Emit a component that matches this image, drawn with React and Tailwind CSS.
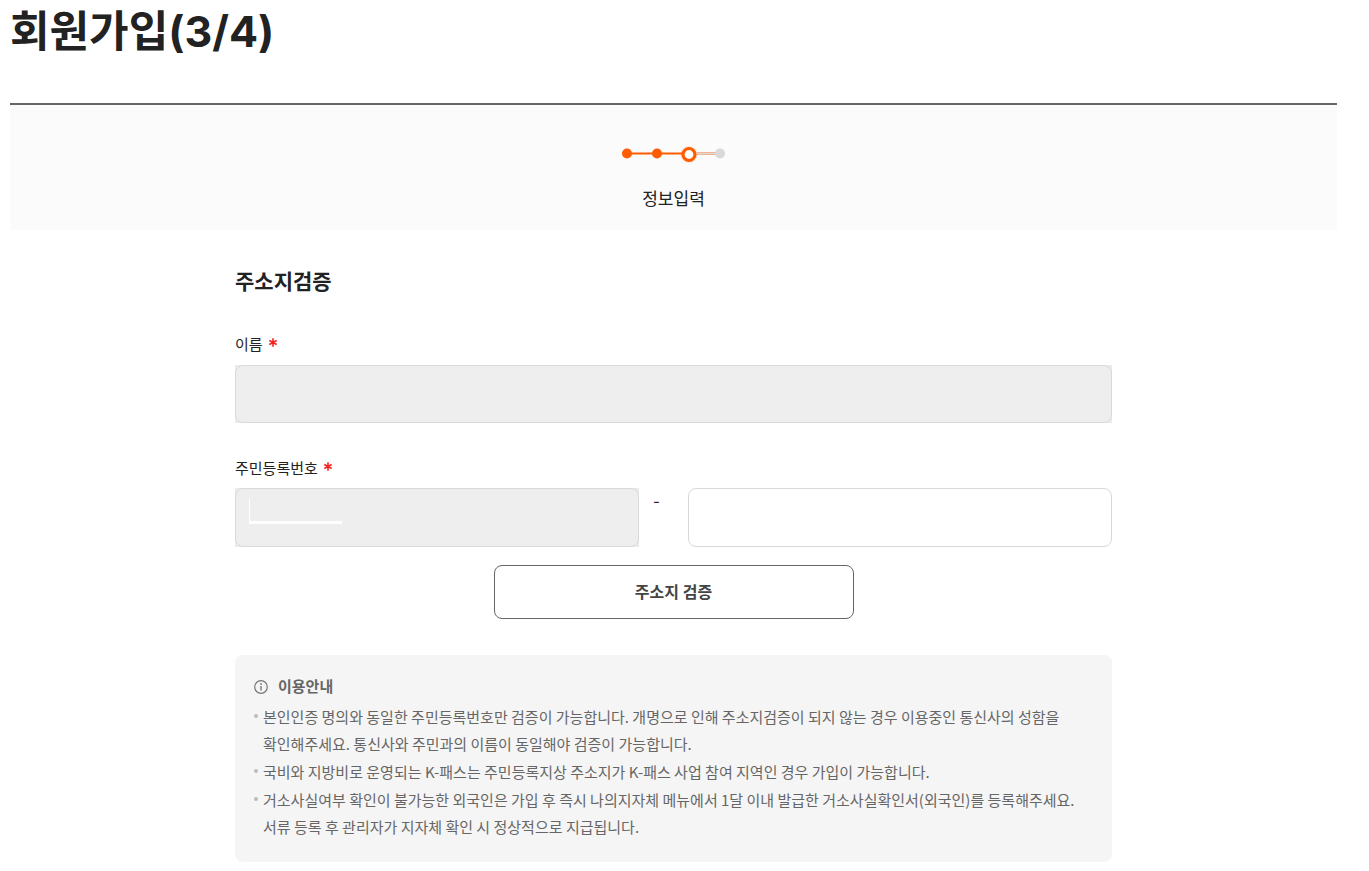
const notices = [
  [
    '본인인증 명의와 동일한 주민등록번호만 검증이 가능합니다. 개명으로 인해 주소지검증이 되지 않는 경우 이용중인 통신사의 성함을',
    '확인해주세요. 통신사와 주민과의 이름이 동일해야 검증이 가능합니다.',
  ],
  ['국비와 지방비로 운영되는 K-패스는 주민등록지상 주소지가 K-패스 사업 참여 지역인 경우 가입이 가능합니다.'],
  [
    '거소사실여부 확인이 불가능한 외국인은 가입 후 즉시 나의지자체 메뉴에서 1달 이내 발급한 거소사실확인서(외국인)를 등록해주세요.',
    '서류 등록 후 관리자가 지자체 확인 시 정상적으로 지급됩니다.',
  ],
];

const StepIndicator = () => (
  <svg width="106" height="20" viewBox="0 0 106 20" role="img" aria-label="3/4">
    <path d="M6 9.5H62" stroke="#ff5c00" strokeWidth="2" />
    <path d="M76 9.5H98" stroke="#f3b495" strokeWidth="3" />
    <path d="M76 9.5H98" stroke="#dedad8" strokeWidth="1" />
    <circle cx="6" cy="9.5" r="5" fill="#ff5c00" />
    <circle cx="36" cy="9.5" r="5" fill="#ff5c00" />
    <circle cx="68" cy="10.5" r="8.5" fill="#ff5c00" opacity="0.12" />
    <circle cx="68" cy="10.5" r="6" fill="#fff" stroke="#ff5c00" strokeWidth="3.2" />
    <circle cx="99" cy="9.5" r="5" fill="#d9d9d9" />
  </svg>
);

const InfoIcon = () => (
  <svg width="14" height="14" viewBox="0 0 14 14" fill="none" aria-hidden="true">
    <circle cx="7" cy="7" r="6.3" stroke="#777" strokeWidth="1.2" />
    <path d="M7 6V10.5" stroke="#777" strokeWidth="1.4" />
    <circle cx="7" cy="4" r="0.9" fill="#777" />
  </svg>
);

const Required = () => (
  <svg className="mb-1.5 ml-1.5" width="8" height="9" viewBox="0 0 8 9" aria-hidden="true">
    <path d="M4 0.3V8.7M0.3 2.4L7.7 6.6M7.7 2.4L0.3 6.6" stroke="#f32222" strokeWidth="1.6" />
  </svg>
);

const FieldLabel = ({ htmlFor, children }) => (
  <label htmlFor={htmlFor} className="flex h-5 items-center text-[15px] leading-5">
    {children}
    <Required />
  </label>
);

const App = () => {
  return (
    <main className="pr-8 pl-2.5 font-['Inter','Noto_Sans_CJK_KR',sans-serif] text-[#222]">
      <h1 className="pt-1 text-[43px] leading-[54px] font-bold">회원가입(3/4)</h1>

      <div className="mt-[45px] flex flex-col items-center border-t-2 border-[#666] bg-[#fbfbfb] pt-[39px] pb-[19px]">
        <StepIndicator />
        <p className="mt-[23px] text-[17px] leading-6">정보입력</p>
      </div>

      <form className="mx-auto max-w-[877px] pt-9" onSubmit={(e) => e.preventDefault()}>
        <h2 className="text-[21px] leading-8 font-bold">주소지검증</h2>

        <div className="mt-[37px]">
          <FieldLabel htmlFor="name">이름</FieldLabel>
          <div className="mt-2.5 bg-[#ebebeb]">
            <input
              id="name"
              type="text"
              disabled
              className="block h-[58px] w-full rounded-lg border border-[#d9d9d9] bg-[#eee] px-4"
            />
          </div>
        </div>

        <div className="mt-9">
          <FieldLabel htmlFor="jumin-front">주민등록번호</FieldLabel>
          <div className="mt-[9px] flex">
            <div className="relative flex-[404] bg-[#ebebeb]">
              <input
                id="jumin-front"
                type="text"
                disabled
                className="block h-[59px] w-full rounded-lg border border-[#d9d9d9] bg-[#eee] px-4"
              />
              <span className="absolute top-[11px] left-3.5 h-[25px] w-[93px] border-b-[3px] border-l border-white" />
            </div>
            <span className="w-[49px] pl-3.5 text-[15px] leading-7">-</span>
            <div className="flex-[424]">
              <input
                type="password"
                aria-label="주민등록번호 뒷자리"
                className="block h-[59px] w-full rounded-lg border border-[#d9d9d9] bg-white px-4"
              />
            </div>
          </div>
        </div>

        <button
          type="submit"
          className="mx-auto mt-[18px] block h-[54px] w-[360px] rounded-lg border border-[#666] bg-white text-base font-bold text-[#444]"
        >
          주소지 검증
        </button>

        <section className="mt-9 rounded-lg bg-[#f5f5f5] px-[19px] pt-5 pb-[22px] text-[15px] text-[#666]">
          <h3 className="flex items-center gap-2.5 leading-6 font-bold">
            <InfoIcon />
            이용안내
          </h3>
          <ul className="mt-1 space-y-px font-['Noto_Sans_CJK_KR',sans-serif] leading-[27px]">
            {notices.map((lines) => (
              <li key={lines[0]} className="flex">
                <span className="mt-[11px] mr-[5px] size-1 shrink-0 rounded-full bg-[#bbb]" />
                <p>
                  {lines.map((line) => (
                    <span key={line} className="block">{line}</span>
                  ))}
                </p>
              </li>
            ))}
          </ul>
        </section>
      </form>
    </main>
  );
};

export default App;
